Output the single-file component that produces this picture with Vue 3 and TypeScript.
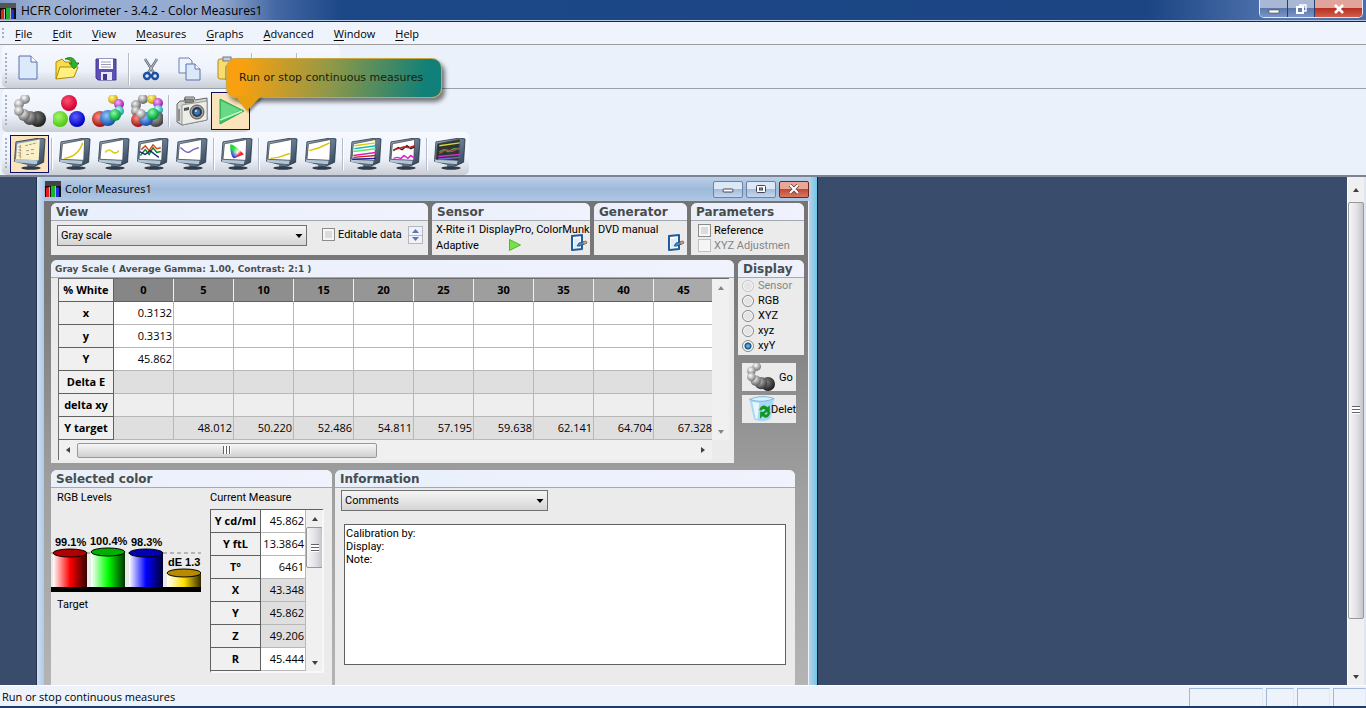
<script setup lang="ts">
import { ref } from 'vue'

type Ball = [number, number, number, string]
interface Chart { name: string; sep?: boolean; dark?: boolean; lines: [string, string][] }

const menus = ['File', 'Edit', 'View', 'Measures', 'Graphs', 'Advanced', 'Window', 'Help']

const ballTools: { name: string; balls: Ball[] }[] = [
  { name: 'Measure gray scale', balls: [[11, 4, 5, 'white'], [5, 9, 5, 'white'], [24, 24, 8, 'dark'], [16, 23, 7, 'gray'], [10, 20, 6, 'silver'], [5, 16, 5, 'white']] },
  { name: 'Measure primaries', balls: [[16, 8, 8, 'crimson'], [7, 24, 8, 'lime'], [24, 24, 8, 'blue']] },
  { name: 'Measure saturations', balls: [[21, 4, 5, 'yellow'], [27, 9, 5, 'magenta'], [27, 16, 5, 'cyan'], [8, 24, 8, 'red'], [16, 23, 8, 'sky'], [23, 20, 6, 'green']] },
  { name: 'Measure all', balls: [[12, 4, 5, 'silver'], [5, 10, 5, 'silver'], [21, 4, 5, 'yellow'], [27, 8, 5, 'magenta'], [27, 15, 5, 'cyan'], [5, 16, 5, 'silver'], [25, 24, 8, 'gray'], [7, 25, 7, 'red'], [15, 24, 7, 'sky'], [10, 19, 5, 'white'], [22, 19, 6, 'green']] },
]
const goBalls = ballTools[0].balls

const ballColors: Record<string, [string, string]> = {
  white: ['#ffffff', '#7c7c7c'], silver: ['#f4f4f4', '#686868'], gray: ['#c0c0c0', '#404040'], dark: ['#808080', '#202020'],
  crimson: ['#ff5070', '#d00030'], lime: ['#a4f470', '#4fca10'], blue: ['#6060ff', '#0000c0'],
  yellow: ['#fff890', '#c89c00'], magenta: ['#ffb0ff', '#981cb0'], cyan: ['#c8ffff', '#18a0a8'],
  red: ['#ff9080', '#a01010'], sky: ['#90c8ff', '#1450b0'], green: ['#80ffa0', '#009838'],
}

const charts: Chart[] = [
  { name: 'Gamma', sep: true, lines: [['M5 21 C14 20 21 14 24 5', '#d8c400']] },
  { name: 'Near black', lines: [['M7 15 C10 11 12 12 14 14 S19 16 21 13', '#d8c400']] },
  { name: 'RGB levels', lines: [['M3 18 L8 12 L12 17 L16 10 L20 15 L24 14', '#108020'], ['M4 12 L8 8 L12 13 L16 7 L20 11 L24 10', '#d04818'], ['M2 14 L8 17 L13 13 L18 17 L22 20', '#102880']] },
  { name: 'Color temperature', lines: [['M4 10 C8 12 10 17 14 14 S19 11 23 10', '#7468c0']] },
  { name: 'CIE diagram', sep: true, lines: [] },
  { name: 'Luminance', sep: true, lines: [['M4 21 L12 20 L24 16', '#d8c400']] },
  { name: 'Contrast', lines: [['M4 13 L14 10 L25 5', '#d8c400']] },
  { name: 'Saturation', sep: true, lines: [['M4 8 L26 5', '#d8d000'], ['M4 11 L26 8', '#20b8b0'], ['M3 14 L26 11', '#50e870'], ['M3 18 L26 15', '#e020a0'], ['M3 20 L26 18', '#d02020'], ['M2 22 L26 21', '#202090']] },
  { name: 'Delta E', lines: [['M4 13 L9 10 L13 12 L18 8 L22 11 L26 9', '#302020'], ['M4 12 L9 11 L15 9 L20 10 L26 8', '#d02020'], ['M4 21 L8 20 L12 21 L15 18 L19 21 L22 18 L26 21', '#e020d0']] },
  { name: 'Combined', sep: true, dark: true, lines: [['M5 8 L26 5', '#d8d840'], ['M5 14 L10 12 L14 14 L20 11 L26 11', '#48a048'], ['M5 16 L12 12 L18 14 L26 10', '#a05050'], ['M4 19 L26 17', '#d030d0'], ['M4 22 L26 20', '#7070d8']] },
]

const levels = [0, 5, 10, 15, 20, 25, 30, 35, 40, 45]
const shade = (i: number) => `rgb(${134 + i * 4},${134 + i * 4},${134 + i * 4})`
const first = (v: string) => levels.map((_, i) => (i === 0 ? v : ''))
const rows = [
  { label: 'x', cls: 'w', cells: first('0.3132') },
  { label: 'y', cls: 'w', cells: first('0.3313') },
  { label: 'Y', cls: 'w', cells: first('45.862') },
  { label: 'Delta E', cls: 'g', cells: first('') },
  { label: 'delta xy', cls: 'l', cells: first('') },
  { label: 'Y target', cls: 'g', cells: ['', '48.012', '50.220', '52.486', '54.811', '57.195', '59.638', '62.141', '64.704', '67.328'] },
]
const measures = [
  ['Y cd/mI', '45.862', 'w'], ['Y ftL', '13.3864', 'w'], ['T°', '6461', 'w'], ['X', '43.348', 'g'],
  ['Y', '45.862', 'g'], ['Z', '49.206', 'g'], ['R', '45.444', 'w'], ['', '', 'w'],
]
const cylinders = [
  { x: 2, top: 22, label: '99.1%', lx: 4, ly: 15, fill: 'cyl-red', cap: '#b00000' },
  { x: 40, top: 21, label: '100.4%', lx: 39, ly: 14, fill: 'cyl-green', cap: '#00b000' },
  { x: 78, top: 22, label: '98.3%', lx: 80, ly: 15, fill: 'cyl-blue', cap: '#0000b0' },
  { x: 116, top: 42, label: 'dE 1.3', lx: 117, ly: 35, fill: 'cyl-gold', cap: '#b88a00' },
]
const spaces = ['Sensor', 'RGB', 'XYZ', 'xyz', 'xyY']
const space = ref('xyY')
const editable = ref(false)
const reference = ref(false)
const notes = ref('Calibration by:\nDisplay:\nNote:')
</script>

<template>
  <div class="app">
    <svg class="defs" aria-hidden="true">
      <defs>
        <radialGradient v-for="(c, k) in ballColors" :id="'b-' + k" :key="k" cx=".4" cy=".35" r=".62">
          <stop offset="0" :stop-color="c[0]" /><stop offset="1" :stop-color="c[1]" />
        </radialGradient>
        <linearGradient id="side" x1="0" y1="0" x2="1" y2="1"><stop offset="0" stop-color="#a0b6cc" /><stop offset="1" stop-color="#2c4058" /></linearGradient>
        <linearGradient id="cyl-red"><stop offset="0" stop-color="#fff" /><stop offset=".5" stop-color="#f00" /><stop offset="1" stop-color="#300" /></linearGradient>
        <linearGradient id="cyl-green"><stop offset="0" stop-color="#fff" /><stop offset=".5" stop-color="#0f0" /><stop offset="1" stop-color="#030" /></linearGradient>
        <linearGradient id="cyl-blue"><stop offset="0" stop-color="#fff" /><stop offset=".5" stop-color="#00f" /><stop offset="1" stop-color="#003" /></linearGradient>
        <linearGradient id="cyl-gold"><stop offset="0" stop-color="#fff" /><stop offset=".5" stop-color="#ffe000" /><stop offset="1" stop-color="#332a00" /></linearGradient>
        <linearGradient id="cie-a" x1="0" y1="0" x2="1" y2="1"><stop offset="0" stop-color="#10d010" /><stop offset=".3" stop-color="#30e850" /><stop offset=".55" stop-color="#fff4e0" /><stop offset=".7" stop-color="#ff2020" /></linearGradient>
        <linearGradient id="cie-b" x1="1" y1="0" x2="0" y2="1"><stop offset=".55" stop-color="#2040ff" stop-opacity="0" /><stop offset=".85" stop-color="#2020ff" /></linearGradient>
      </defs>
    </svg>

    <header class="titlebar">
      <svg class="logo" viewBox="0 0 16 16"><rect width="16" height="16" fill="#101010" /><path d="M0 0H16V5H0Z" fill="#555" /><path d="M1 16V7l3-1v10Z" fill="#e02020" /><path d="M6 16V5h4v11Z" fill="#20b030" /><path d="M11 16V6l3 1v9Z" fill="#2030e0" /><path d="M4.500 6v10M10.500 5v11" stroke="#fff" opacity=".7" /></svg>
      <span>HCFR Colorimeter - 3.4.2 - Color Measures1</span>
      <div class="winbtns">
        <button aria-label="Minimize" class="min"><svg viewBox="0 0 12 10"><rect x="1" y="6" width="10" height="3" fill="#fff" stroke="#445" stroke-width=".6" /></svg></button>
        <button aria-label="Restore" class="max"><svg viewBox="0 0 12 10"><path d="M4 1h7v6H9" fill="none" stroke="#fff" stroke-width="1.400" /><rect x="2" y="3" width="6" height="6" fill="none" stroke="#fff" stroke-width="2" /></svg></button>
        <button aria-label="Close" class="close"><svg viewBox="0 0 12 10"><path d="M2 1 10 9M10 1 2 9" stroke="#fff" stroke-width="2.600" /></svg></button>
      </div>
    </header>

    <nav class="menubar">
      <i class="grip"></i>
      <button v-for="m in menus" :key="m"><u>{{ m[0] }}</u>{{ m.slice(1) }}</button>
    </nav>

    <div class="toolrow first">
      <div class="toolbar files">
        <i class="grip"></i>
        <button aria-label="New"><svg viewBox="0 0 32 32"><path d="M6 3h12l6 6v17H6Z" fill="#dce9fb" stroke="#5870b0" /><path d="M18 3v6h6" fill="#fff" stroke="#5870b0" /></svg></button>
        <button aria-label="Open"><svg viewBox="0 0 32 32"><path d="M4 26V9l6-3 3 3h9v4" fill="#f8dc50" stroke="#b08800" /><path d="M4 26 8 14h18l-4 10Z" fill="#fff080" stroke="#b08800" /><path d="M13 6c5-3 10-1 11 4h3l-5 6-5-6h3c-1-3-4-4-7-4Z" fill="#30b030" stroke="#107810" stroke-width=".8" /></svg></button>
        <button aria-label="Save"><svg viewBox="0 0 32 32"><path d="M5 6h20v21H7l-2-2Z" fill="#5c50b8" stroke="#40368c" /><path d="M8 6h14v10H8Z" fill="#fff" /><path d="M10 9h10M10 11.500h10M10 14h10" stroke="#9a9ab8" /><path d="M10 19h11v8H10Z" fill="#e4e4f4" /><path d="M12 21h4v6h-4Z" fill="#40368c" /></svg></button>
        <i class="sep"></i>
        <button aria-label="Cut"><svg viewBox="0 0 32 32"><path d="M9 6 18 20M21 6 12 20" stroke="#606878" stroke-width="2.400" /><path d="M9 6 18 20M21 6 12 20" stroke="#d8dce4" stroke-width=".8" /><circle cx="11" cy="23" r="3" fill="none" stroke="#1850a8" stroke-width="2.400" /><circle cx="19" cy="23" r="3" fill="none" stroke="#1850a8" stroke-width="2.400" /></svg></button>
        <button aria-label="Copy"><svg viewBox="0 0 32 32"><path d="M4 5h10l3 3v12H4Z" fill="#eef4ff" stroke="#6880b8" /><path d="M11 11h9l5 5v11H11Z" fill="#dce9fb" stroke="#5870b0" /><path d="M20 11v5h5" fill="#fff" stroke="#5870b0" /></svg></button>
        <button aria-label="Paste"><svg viewBox="0 0 32 32"><rect x="4" y="6" width="18" height="20" rx="2" fill="#f8dc70" stroke="#b08820" /><rect x="9" y="4" width="8" height="4" fill="#c8ccd8" stroke="#70788c" /><path d="M12 13h13v14H12Z" fill="#eef4ff" stroke="#5870b0" /></svg></button>
        <i class="sep"></i>
        <button aria-label="Print"></button>
        <i class="sep"></i>
      </div>
    </div>
    <div class="toolrow">
      <div class="toolbar">
        <i class="grip"></i>
        <button v-for="t in ballTools" :key="t.name" :aria-label="t.name">
          <svg viewBox="0 0 32 32"><circle v-for="(b, i) in t.balls" :key="i" :cx="b[0]" :cy="b[1]" :r="b[2]" :fill="`url(#b-${b[3]})`" /></svg>
        </button>
        <i class="sep"></i>
        <button aria-label="Capture"><svg viewBox="0 0 32 32"><path d="M1 9 4 6h4l1-4h9l1 3 12-2v22L6 30l-5-3Z" fill="#d4d4d0" stroke="#666" /><path d="M6 10 31 6v19L6 30Z" fill="#ecece8" stroke="#888" stroke-width=".8" /><path d="M9 4h8l1 3-9 1Z" fill="#888" stroke="#444" stroke-width=".6" /><path d="M3 14v12" stroke="#777" stroke-width="1.500" /><circle cx="21" cy="17" r="7" fill="#a4a4a4" stroke="#555" /><circle cx="21" cy="17" r="5" fill="#303840" /><circle cx="21" cy="17" r="3" fill="#3478c0" /><circle cx="20" cy="16" r="1" fill="#d0e8ff" /><path d="M8 13l5-1v3l-5 1Z" fill="#555" /></svg></button>
        <button aria-label="Run or stop continuous measures" class="on"><svg viewBox="0 0 32 32"><path d="M5 4 29 16 5 29Z" fill="#38c860" stroke="#30a858" stroke-linejoin="round" /><path d="M6 6 25 15 6 24Z" fill="#80e098" opacity=".7" /><path d="M5 25 27 16" stroke="#c8f8d0" stroke-width="1.400" /></svg></button>
      </div>
    </div>
    <div class="toolrow last">
      <div class="toolbar">
        <i class="grip"></i>
        <button aria-label="Measures table" class="on">
          <svg viewBox="0 0 32 33"><path d="M1.500 4 26 0 31.500 1 30 25 21 29 0 24Z" fill="url(#side)" stroke="#202c38" stroke-width=".8" /><path d="M0 22 24 23 23 27 1 25Z" fill="#b4c6d6" /><path d="M3 6 26 1.500 25 23 1.500 22Z" fill="#fcf0c8" /><path d="M6 7v14M4 9l4 1M4 12l4 1M4 15l4 1M4 18l4 1M11 8l12-3M12 13h3M17 12h3M12 17h3M17 16h3" stroke="#a09880" stroke-dasharray="3 1" fill="none" /><path d="M13 27h8v4h-8Z" fill="#5a7088" /><ellipse cx="17" cy="31" rx="10" ry="1.800" fill="#303c48" /></svg>
        </button>
        <template v-for="c in charts" :key="c.name">
          <i v-if="c.sep" class="sep"></i>
          <button :aria-label="c.name">
            <svg viewBox="0 0 32 33">
              <path d="M1.500 4 26 0 31.500 1 30 25 21 29 0 24Z" fill="url(#side)" stroke="#202c38" stroke-width=".8" />
              <path d="M0 22 24 23 23 27 1 25Z" fill="#b4c6d6" />
              <path d="M3 6 26 1.500 25 23 1.500 22Z" :fill="c.dark ? '#303430' : '#ffffff'" stroke="#404850" stroke-width=".8" />
              <path v-for="(l, i) in c.lines" :key="i" :d="l[0]" :stroke="l[1]" fill="none" stroke-width="1.500" />
              <g v-if="c.name === 'CIE diagram'"><path d="M9 7C11 5 22 15 23 17L13 21C10 20 9 12 9 7Z" fill="url(#cie-a)" /><path d="M9 7C11 5 22 15 23 17L13 21C10 20 9 12 9 7Z" fill="url(#cie-b)" /></g>
              <path d="M13 27h8v4h-8Z" fill="#5a7088" /><ellipse cx="17" cy="31" rx="10" ry="1.800" fill="#303c48" />
            </svg>
          </button>
        </template>
      </div>
    </div>

    <div class="tip" role="tooltip">
      <span>Run or stop continuous measures</span>
      <svg viewBox="0 0 30 16"><path d="M4 0 H30 L16 15 Z" fill="#e8a010" /></svg>
    </div>

    <main class="desktop">
      <section class="child">
        <header class="childbar">
          <svg class="logo" viewBox="0 0 16 16"><rect width="16" height="16" fill="#101010" /><path d="M0 0H16V5H0Z" fill="#444" /><path d="M1 16V7l3-1v10Z" fill="#e02020" /><path d="M6 16V5h4v11Z" fill="#20b030" /><path d="M11 16V6l3 1v9Z" fill="#2030e0" /><path d="M4.500 6v10M10.500 5v11" stroke="#fff" opacity=".7" /></svg>
          <h1>Color Measures1</h1>
          <button aria-label="Minimize window"><svg viewBox="0 0 12 10"><rect x="1" y="5" width="10" height="3" rx="1" fill="#fff" stroke="#445" /></svg></button>
          <button aria-label="Maximize window"><svg viewBox="0 0 12 10"><rect x="1.500" y="1.500" width="9" height="7" rx="1" fill="#fff" stroke="#445" /><rect x="4.500" y="4" width="3" height="2" fill="#9ab" stroke="#445" /></svg></button>
          <button aria-label="Close window" class="close"><svg viewBox="0 0 12 10"><path d="M2 1 10 9M10 1 2 9" stroke="#633" stroke-width="3.600" /><path d="M2 1 10 9M10 1 2 9" stroke="#fff" stroke-width="2.200" /></svg></button>
        </header>

        <div class="content">
          <div class="row top">
            <section class="panel view">
              <h2>View</h2>
              <div class="body">
                <div class="combo"><select aria-label="View"><option>Gray scale</option></select><svg viewBox="0 0 7 4"><path d="M0 0H7L3.500 4Z" /></svg></div>
                <label class="check"><input v-model="editable" type="checkbox">Editable data</label>
                <div class="spin">
                  <button aria-label="Up"><svg viewBox="0 0 7 4"><path d="M0 4H7L3.500 0Z" fill="#5c74b8" /></svg></button>
                  <button aria-label="Down"><svg viewBox="0 0 7 4"><path d="M0 0H7L3.500 4Z" fill="#5c74b8" /></svg></button>
                </div>
              </div>
            </section>
            <section class="panel sensor">
              <h2>Sensor</h2>
              <div class="body">
                <p>X-Rite i1 DisplayPro, ColorMunk</p>
                <div class="line"><p>Adaptive</p><svg class="play" viewBox="0 0 12 12"><path d="M0.500 0.500 11.500 6 0.500 11.500Z" fill="#78e048" stroke="#50b830" /></svg></div>
                <button class="cfg" aria-label="Configure sensor"><svg viewBox="0 0 18 18"><path d="M2 2 12 1v14L2 16Z" fill="#fff" stroke="#1c5ca0" stroke-width="2" stroke-linejoin="round" /><path d="M4 5l6-1v9l-6 1Z" fill="#dcecfa" /><path d="M7 12 9 9 16 7l1 2-7 3Z" fill="#4888c0" stroke="#284c70" stroke-width=".8" /><path d="M13 8l3-1 1 2-3 1Z" fill="#d89858" /></svg></button>
              </div>
            </section>
            <section class="panel gen">
              <h2>Generator</h2>
              <div class="body">
                <p>DVD manual</p>
                <button class="cfg" aria-label="Configure generator"><svg viewBox="0 0 18 18"><path d="M2 2 12 1v14L2 16Z" fill="#fff" stroke="#1c5ca0" stroke-width="2" stroke-linejoin="round" /><path d="M4 5l6-1v9l-6 1Z" fill="#dcecfa" /><path d="M7 12 9 9 16 7l1 2-7 3Z" fill="#4888c0" stroke="#284c70" stroke-width=".8" /><path d="M13 8l3-1 1 2-3 1Z" fill="#d89858" /></svg></button>
              </div>
            </section>
            <section class="panel params">
              <h2>Parameters</h2>
              <div class="body">
                <label class="check"><input v-model="reference" type="checkbox">Reference</label>
                <label class="check off"><input type="checkbox" disabled>XYZ Adjustmen</label>
              </div>
            </section>
          </div>

          <div class="row mid">
            <section class="panel scale">
              <h2>Gray Scale ( Average Gamma: 1.00, Contrast: 2:1 )</h2>
              <div class="gridbox">
                <div class="gridtop">
                  <div class="clip">
                    <table class="grid">
                      <thead><tr><th class="rh">% White</th><th v-for="(l, i) in levels" :key="l" :style="{ background: shade(i) }">{{ l }}</th></tr></thead>
                      <tbody><tr v-for="r in rows" :key="r.label" :class="r.cls"><th class="rh">{{ r.label }}</th><td v-for="(c, i) in r.cells" :key="i">{{ c }}</td></tr></tbody>
                    </table>
                  </div>
                  <div class="vbar"><button class="arr up dim" aria-label="Scroll up"></button><span class="fill"></span><button class="arr down dim" aria-label="Scroll down"></button></div>
                </div>
                <div class="hbar">
                  <button class="arr left" aria-label="Scroll left"></button><span class="thumb"><i></i></span><span class="fill"></span><button class="arr right" aria-label="Scroll right"></button>
                </div>
              </div>
            </section>
            <div class="side">
              <section class="panel">
                <h2>Display</h2>
                <div class="body radios">
                  <label v-for="s in spaces" :key="s" :class="{ off: s === 'Sensor' }"><input v-model="space" type="radio" name="space" :value="s" :disabled="s === 'Sensor'">{{ s }}</label>
                </div>
              </section>
              <button class="big"><svg viewBox="0 0 32 32"><circle v-for="(b, i) in goBalls" :key="i" :cx="b[0]" :cy="b[1]" :r="b[2]" :fill="`url(#b-${b[3]})`" /></svg><span>Go</span></button>
              <button class="big del"><svg viewBox="0 0 32 32"><path d="M3 5C12 2 22 2 31 4L27 27C20 31 12 30 8 28Z" fill="#a8d8f4" /><path d="M3 5C12 8 22 8 31 4 22 1 12 1 3 5Z" fill="#d8f0ff" stroke="#70b0dc" /><path d="M6 8 14 9 12 27 10 27Z" fill="#e8f6ff" /><path d="M14 17c2-6 7-6 9-3l3-2v8h-8l3-3c-2-2-3-1-5 1ZM27 20c-2 7-7 7-9 4l-3 3v-8h7l-2 3c2 1 3 0 4-2Z" fill="#109820" /></svg><span>Delet</span></button>
            </div>
          </div>

          <div class="row low">
            <section class="panel selected">
              <h2>Selected color</h2>
              <div class="cols">
                <div class="bars">
                  <p>RGB Levels</p>
                  <svg class="cyls" viewBox="0 0 150 62">
                    <path d="M0 22H150" stroke="#808080" stroke-dasharray="4 3" />
                    <g v-for="c in cylinders" :key="c.label">
                      <rect :x="c.x" :y="c.top" width="34" :height="57 - c.top" :fill="`url(#${c.fill})`" />
                      <ellipse :cx="c.x + 17" :cy="c.top" rx="17" ry="4" :fill="c.cap" stroke="#000" />
                      <text :x="c.lx" :y="c.ly">{{ c.label }}</text>
                    </g>
                    <rect y="56" width="150" height="5" />
                  </svg>
                  <p>Target</p>
                </div>
                <div class="current">
                  <p>Current Measure</p>
                  <div class="mbox">
                    <table class="grid small"><tbody><tr v-for="m in measures" :key="m[0]" :class="m[2]"><th class="rh">{{ m[0] }}</th><td>{{ m[1] }}</td></tr></tbody></table>
                    <div class="vbar"><button class="arr up" aria-label="Scroll up"></button><span class="thumb"><i></i></span><span class="fill"></span><button class="arr down" aria-label="Scroll down"></button></div>
                  </div>
                </div>
              </div>
            </section>
            <section class="panel info">
              <h2>Information</h2>
              <div class="combo"><select aria-label="Information"><option>Comments</option></select><svg viewBox="0 0 7 4"><path d="M0 0H7L3.500 4Z" /></svg></div>
              <textarea v-model="notes" aria-label="Comments"></textarea>
            </section>
          </div>
        </div>
      </section>

      <div class="vbar main"><button class="arr up" aria-label="Scroll up"></button><span class="thumb"><i></i></span><span class="fill"></span><button class="arr down" aria-label="Scroll down"></button></div>
    </main>

    <footer class="status"><span>Run or stop continuous measures</span><i class="p1"></i><i class="p2"></i><i class="p3"></i><i class="p3"></i></footer>
  </div>
</template>

<style>
body { margin: 0; overflow: hidden; }
</style>

<style scoped>
* { box-sizing: border-box; }
.app { position: relative; display: flex; flex-direction: column; height: 100vh; background: #ebf1fb; font: 12px/16px "Open Sans", "Noto Sans", sans-serif; color: #000; overflow: hidden; }
.defs { position: absolute; width: 0; height: 0; }
button { border: 0; background: none; padding: 0; font: inherit; color: inherit; }
p, h1, h2 { margin: 0; font-weight: normal; }
svg { display: block; flex: none; }

.titlebar { display: flex; flex: none; align-items: center; height: 22px; gap: 5px; border-bottom: 1px solid #14284c; box-shadow: inset 0 -1px #b4c8e4; background: linear-gradient(90deg, #8098c4 0, #9cb0d4 40px, #93a9d0 220px, #4468a4 275px, #1d4888 340px, #1b4583 84%, #5577b2 94%, #4a6caa); }
.logo { width: 16px; height: 16px; }
.winbtns { display: flex; align-self: flex-start; margin: 0 3px 0 auto; border: 1px solid #e0e8f4; border-top: 0; border-radius: 0 0 5px 5px; height: 18px; overflow: hidden; }
.winbtns button { display: grid; place-items: center; width: 28px; background: linear-gradient(#a8b8d4 45%, #5c78ac 50%, #7c96c4); border-right: 1px solid #24406c; }
.winbtns .max { width: 27px; }
.winbtns .close { width: 47px; border: 0; background: linear-gradient(#e0a49c 45%, #b83024 50%, #d06048); }
.winbtns svg { width: 12px; height: 10px; }

.menubar { display: flex; flex: none; align-items: center; gap: 2px; height: 23px; padding-top: 1px; border-bottom: 1px solid #9c9c9c; background: #eff4fc; font-size: 11px; }
.menubar .grip { height: 12px; margin: 0 0 0 2px; width: 2px; }
.menubar button { padding: 0 9px; }
.menubar u { text-underline-offset: 2px; }
.grip { flex: none; height: 32px; background: repeating-linear-gradient(#a4b0c4 0 2px, transparent 2px 4px); }

.toolrow { flex: none; display: flex; height: 43px; }
.toolrow.first { height: 44px; border-bottom: 1px solid #9aa0ac; }
.toolrow.last { height: 45px; border-bottom: 2px solid #7c8492; }
.toolbar { display: flex; align-items: center; margin-left: 2px; border-radius: 5px; background: linear-gradient(#f6f9ff, #eef2fa 60%, #c9cdd5); }
.toolbar.files { padding: 4px 40px 0 0; }
.toolbar .grip { margin: 0 3px; width: 2px; }
.toolbar.files .grip { margin-right: 2px; }
.toolbar button { display: grid; place-items: center; width: 39px; height: 38px; }
.toolbar button svg { width: 32px; height: 32px; }
.toolbar .on { background: #fbe3bb; border: 1px solid #10106c; }
.sep { flex: none; width: 2px; height: 32px; margin: 0 2px; border-left: 1px solid #b4bac8; border-right: 1px solid #fff; }

.tip { position: absolute; left: 226px; top: 58px; height: 40px; padding: 0 18px 0 12px; display: flex; align-items: center; border-radius: 10px; border: 1px solid #c8a840; background: linear-gradient(100deg, #f8a010 8%, #909848 48%, #108078 92%); box-shadow: 3px 4px 4px rgba(0, 0, 0, .5); font: 11px/14px "DejaVu Sans", sans-serif; color: #1c1c08; white-space: nowrap; }
.tip svg { position: absolute; left: 4px; top: 37px; width: 30px; height: 16px; filter: drop-shadow(2px 2px 1px rgba(0, 0, 0, .4)); }

.desktop { flex: 1; min-height: 0; display: flex; background: #3a4c6b; overflow: hidden; padding-left: 36px; }
.child { flex: 0 1 782px; min-width: 0; display: flex; flex-direction: column; padding: 0 8px 0 7px; border-left: 1px solid #24344c; border-right: 1px solid #101c2c; background: linear-gradient(90deg, #cfe0f2, #a9c6e6 8px, #b8d0ea 99%, #6fc8e8); }
.childbar { flex: none; display: flex; align-items: center; height: 24px; gap: 3px; padding-left: 1px; background: linear-gradient(#bdd0e8, #9db9da 50%, #b0c8e4); }
.childbar h1 { font-size: 11px; line-height: 16px; flex: 1; margin-left: 1px; }
.childbar button { display: grid; place-items: center; width: 30px; height: 17px; border: 1px solid #6c82a4; border-radius: 2px; background: linear-gradient(#dce8f6 45%, #a4bcdc 50%, #c4d6ec); }
.childbar button.close { border-color: #702820; background: linear-gradient(#e8a898 45%, #c04838 50%, #d87860); }
.childbar button svg { width: 12px; height: 10px; }
.content { flex: 1; min-height: 0; display: flex; flex-direction: column; gap: 5px; padding: 2px 4px 0 7px; background: linear-gradient(#747474, #7c7c7c 20%, #a0a0a0 60%, #b4b4b4); border-right: 1px solid #f0f4fa; font: 11px/13px Roboto, "Liberation Sans", sans-serif; }
.row { display: flex; gap: 4px; min-height: 0; flex: none; }
.panel { display: flex; flex-direction: column; min-width: 0; background: #ebebeb; border-radius: 6px 6px 0 0; overflow: hidden; }
.panel h2 { flex: none; height: 18px; padding-left: 5px; border-bottom: 1px solid #a4a8b0; background: linear-gradient(90deg, #e9f0fb, #f0f2fc); font: bold 12px/18px "DejaVu Sans", Verdana, sans-serif; color: #484c4c; white-space: nowrap; }
.body { position: relative; flex: 1; }
.top { height: 52px; }
.view { flex: 377 1 0; }
.sensor { flex: 158 1 0; }
.gen { flex: 93 1 0; }
.params { flex: 113 1 0; }
.view .body { display: flex; align-items: flex-start; padding: 4px 5px 0 6px; }
.combo { position: relative; width: 250px; height: 21px; }
.combo select { appearance: none; width: 100%; height: 100%; border: 1px solid #707070; border-radius: 0; padding: 0 3px; background: linear-gradient(#f4f4f4, #e8e8e8 45%, #d4d4d4); font: inherit; color: #000; }
.combo svg { position: absolute; right: 4px; top: 9px; width: 8px; height: 4px; pointer-events: none; }
.check { display: flex; align-items: center; gap: 3px; height: 15px; white-space: nowrap; }
.check input { appearance: none; flex: none; width: 13px; height: 13px; margin: 0; border: 1px solid #8c8c8c; background: #dcdcdc; box-shadow: inset 0 0 0 2px #f6f6f6; }
.off { color: #868686; }
.off input { border-color: #c0c0c0; background: #f4f4f4; }
.view .check { margin: 2px auto 0 15px; }
.spin { display: flex; flex-direction: column; width: 15px; height: 18px; margin-top: 1px; border: 1px solid #b4b8c4; background: #f0f2f8; }
.spin button { flex: 1; display: grid; place-items: center; }
.spin button + button { border-top: 1px solid #b4b8c4; }
.spin svg { width: 7px; height: 4px; }
.sensor .body, .gen .body { padding: 2px 0 0 4px; white-space: nowrap; }
.line { display: flex; align-items: center; gap: 30px; height: 18px; }
.play { width: 12px; height: 12px; }
.cfg { position: absolute; right: 2px; bottom: 3px; }
.cfg svg { width: 18px; height: 18px; }
.params .body { padding: 2px 0 0 7px; }

.scale { flex: 683 1 0; height: 203px; }
.scale h2 { padding-left: 4px; font-size: 9px; }
.gridbox { margin: 0 5px 3px 7px; border-left: 1px solid #6c6c6c; border-top: 1px solid #6c6c6c; flex: 1; min-height: 0; display: flex; flex-direction: column; }
.gridtop { display: flex; height: 162px; }
.clip { flex: 1; min-width: 0; overflow: hidden; }
.grid { border-collapse: separate; border-spacing: 0; table-layout: fixed; width: 655px; font: 12px/16px "Open Sans", "Noto Sans", sans-serif; background: #fff; }
.grid th, .grid td { height: 23px; padding: 0 1px 0 0; border-right: 1px solid #b8b8b8; border-bottom: 1px solid #b8b8b8; width: 60px; text-align: right; font-size: 11px; white-space: nowrap; overflow: hidden; }
.grid th { text-align: center; font-weight: bold; padding: 0; }
.grid thead th { border-right-color: #f0f0f0; border-bottom-color: #606060; }
.grid th.rh { width: 55px; background: #f0f0f0; border-right-color: #606060; border-bottom-color: #606060; }
.grid .g td { background: #dfdfdf; }
.grid .l td { background: #eeeeee; }
.vbar { display: flex; flex-direction: column; flex: none; width: 17px; background: #f0f0f0; }
.hbar { display: flex; height: 20px; margin-right: 17px; align-items: center; background: #f0f0f0; }
.fill { flex: 1; }
.arr { flex: none; display: grid; place-items: center; width: 17px; height: 17px; }
.arr::before { content: ""; border: 3px solid transparent; }
.up::before { border-bottom: 4px solid #404040; border-top: 0; }
.down::before { border-top: 4px solid #404040; border-bottom: 0; }
.left::before { border-right: 4px solid #404040; border-left: 0; }
.right::before { border-left: 4px solid #404040; border-right: 0; }
.dim { opacity: .6; }
.thumb { display: grid; place-items: center; border: 1px solid #989898; border-radius: 2px; background: linear-gradient(90deg, #f6f6f6, #e4e4e8 50%, #c4c6cc); }
.thumb i { width: 8px; height: 8px; background: repeating-linear-gradient(#606468 0 1px, #fff 1px 3px); }
.hbar .thumb { flex: 0 0 46%; height: 15px; background: linear-gradient(#f6f6f6, #d0d0d2); }
.hbar .thumb i { background: repeating-linear-gradient(90deg, #606468 0 1px, #fff 1px 3px); }
.hbar .arr { width: 18px; }

.side { flex: 66 1 0; min-width: 0; }
.radios { padding: 0 0 2px 4px; }
.radios label { display: flex; align-items: center; gap: 4px; height: 15px; }
.radios input { appearance: none; width: 12px; height: 12px; margin: 0; border: 1px solid #888; border-radius: 50%; background: #e4e4e4; box-shadow: inset 0 0 0 1px #fff; }
.radios .off input { border-color: #c4c4c4; }
.radios input:checked { background: radial-gradient(circle, #60b0e8 0 1px, #10507c 3px, #e8e8e8 4px); }
.big { display: flex; align-items: center; width: 54px; height: 28px; margin: 8px 0 0 4px; overflow: hidden; background: #ebebeb; white-space: nowrap; }
.big svg { width: 32px; height: 28px; margin: 0 2px 0 3px; }
.big + .big { margin-top: 4px; }
.del svg { margin: 0 -6px 0 3px; }

.low { flex: 1; gap: 3px; margin: 2px 9px 0 0; }
.selected { flex: 281 1 0; }
.info { flex: 460 1 0; }
.cols { display: flex; justify-content: space-between; padding: 3px 8px 0 0; }
.bars p { margin-left: 6px; }
.cyls { width: 150px; height: 62px; margin: 27px 0 5px; font: bold 11px "Liberation Sans", Arial, sans-serif; }
.current { width: 114px; }
.mbox { display: flex; height: 164px; margin-top: 5px; border: 2px solid #f8f8f8; border-left: 1px solid #606060; border-top: 1px solid #606060; overflow: hidden; }
.grid.small { flex: 1; width: 95px; height: 184px; }
.small th.rh { width: 50px; }
.small td { width: 45px; }
.mbox .thumb { height: 41px; }
.info .combo { margin: 2px 0 0 6px; width: 207px; }
.info textarea { margin: 13px 9px 0 9px; height: 141px; border: 1px solid #606060; background: #fff; padding: 2px 1px; resize: none; font: inherit; color: #000; }

.main { width: 19px; margin-left: auto; border-left: 1px solid #fff; border-right: 2px solid #dfe6f0; }
.main .arr { width: 16px; }
.main .arr.up { height: 25px; }
.main .thumb { flex: 0 0 82%; }

.status { flex: none; display: flex; align-items: center; gap: 3px; height: 23px; padding: 2px 0 0 2px; border-top: 1px solid #fff; border-bottom: 2px solid #1c3c6c; background: #edf2fb; font-size: 11px; }
.status span { flex: 1; }
.status i { height: 18px; border: 1px solid #a0b8dc; border-right-color: #e0e8f4; border-bottom: 0; }
.p1 { width: 74px; }
.p2 { width: 28px; }
.p3 { width: 33px; }
</style>
